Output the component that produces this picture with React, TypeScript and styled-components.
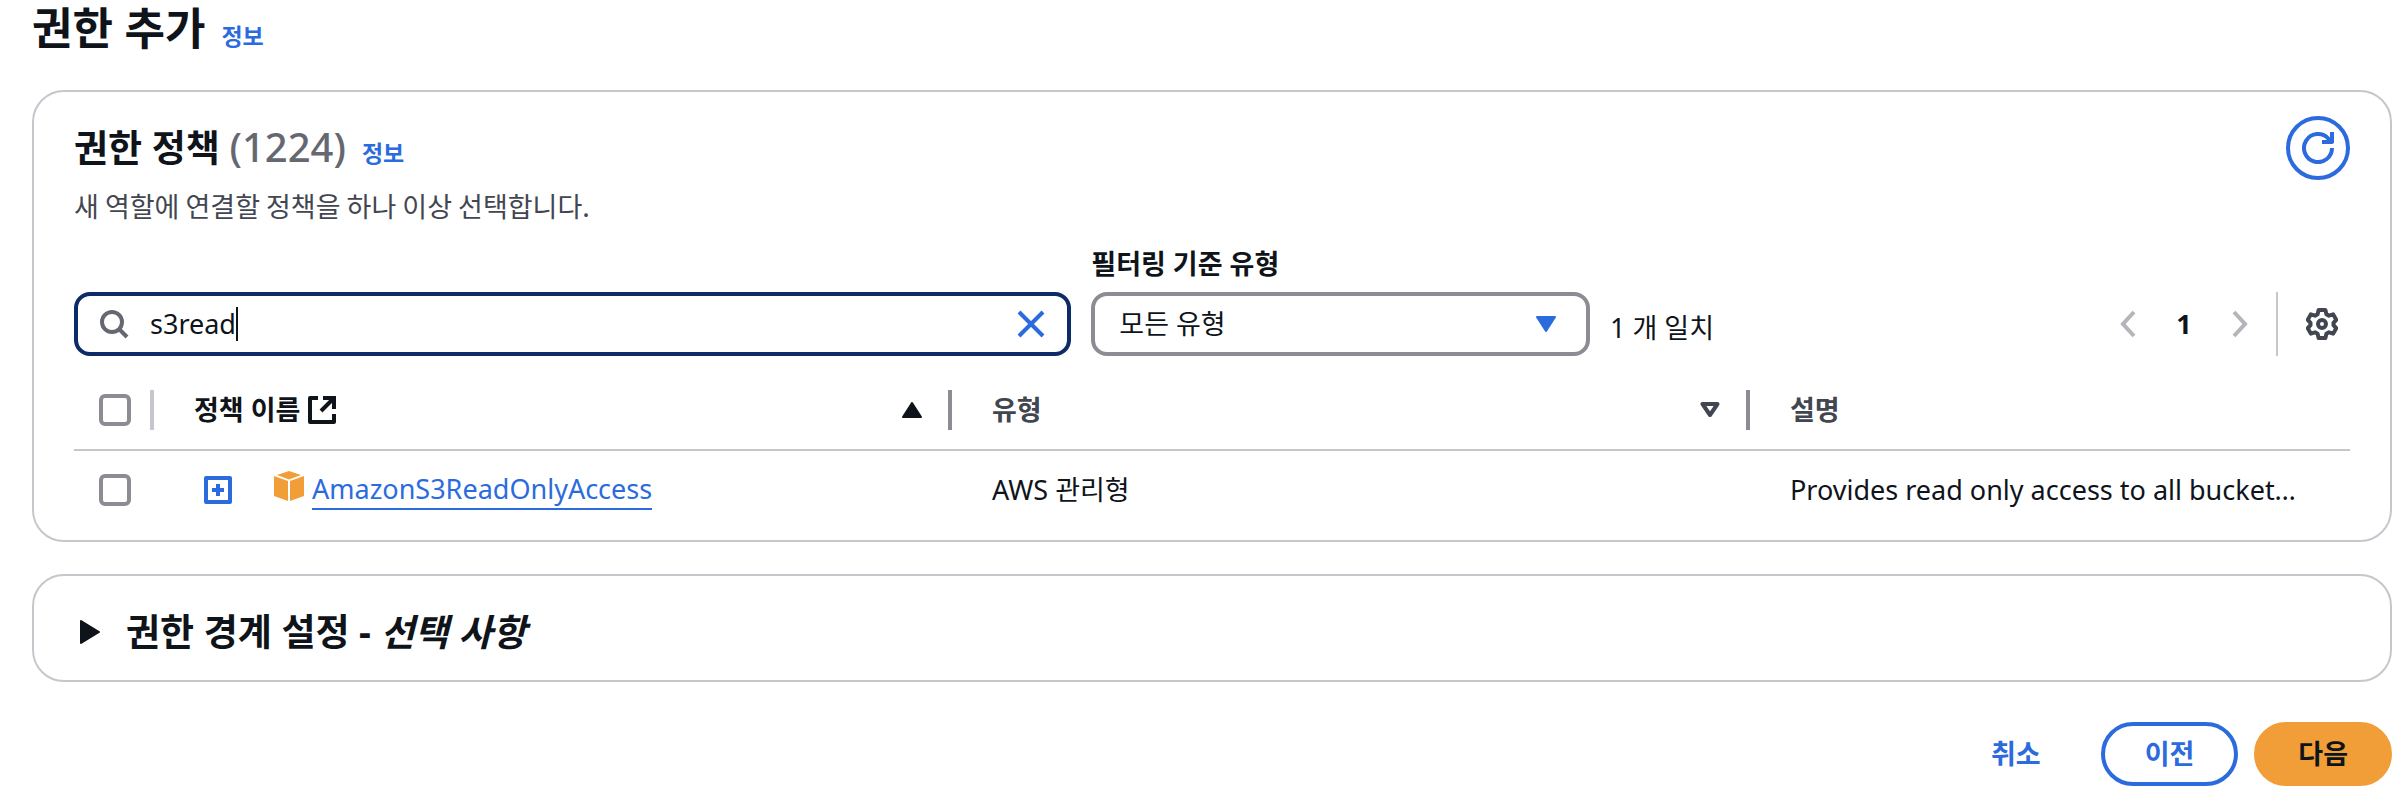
import React, { useState } from 'react';
import styled, { createGlobalStyle, css } from 'styled-components';

const color = {
  text: '#0f141a',
  heading: '#424650',
  muted: '#656871',
  line: '#c6c6cd',
  control: '#8c8c94',
  disabled: '#b4b4bb',
  link: '#2b6bdd',
  focus: '#0d2b66',
  primary: '#f19e38',
};

const Global = createGlobalStyle`
  *, *::before, *::after { box-sizing: border-box; }
  body {
    margin: 0;
    background: #fff;
    color: ${color.text};
    font-family: "Noto Sans", "Noto Sans CJK KR", sans-serif;
    font-size: 27px;
    line-height: 40px;
  }
  button, input, select { font: inherit; color: inherit; }
  svg { display: block; flex: none; }
`;

const Page = styled.main`
  display: flex;
  flex-direction: column;
  gap: 32px;
  padding: 0 16px 22px 32px;
`;

const TitleRow = styled.header`
  display: flex;
  align-items: baseline;
  gap: 16px;
`;

const PageTitle = styled.h1`
  margin: 0;
  padding-bottom: 2px;
  font-size: 44px;
  line-height: 56px;
  font-weight: 700;
`;

const SectionTitle = styled.h2`
  margin: 0;
  font-size: 37px;
  line-height: 56px;
  font-weight: 700;
`;

const Count = styled.span`
  font-size: 40px;
  line-height: 40px;
  font-weight: 500;
  color: ${color.muted};
`;

const InfoLink = styled.a`
  font-size: 23px;
  font-weight: 700;
  color: ${color.link};
  text-decoration: none;
`;

const Card = styled.section`
  border: 2px solid ${color.line};
  border-radius: 32px;
  padding: 24px 40px 18px;
`;

const CardHeader = styled.div`
  display: flex;
  justify-content: space-between;
  align-items: flex-start;
`;

const CardTitle = styled(TitleRow)`
  padding-top: 4px;
`;

const Description = styled.p`
  margin: 10px 0 0;
  color: ${color.heading};
  font-family: "Noto Sans CJK KR", sans-serif;
`;

const IconButton = styled.button`
  display: flex;
  align-items: center;
  justify-content: center;
  padding: 0;
  border: 0;
  background: none;
  color: ${color.heading};
  &:disabled { color: ${color.disabled}; }
`;

const RefreshButton = styled(IconButton)`
  width: 64px;
  height: 64px;
  border: 4px solid ${color.link};
  border-radius: 50%;
  color: ${color.link};
`;

const Toolbar = styled.div`
  display: flex;
  align-items: flex-end;
  justify-content: space-between;
  gap: 20px;
  margin-top: 18px;
`;

const Filters = styled.div`
  display: grid;
  grid-template-columns: 2fr 1fr;
  align-items: end;
  gap: 20px;
  flex: 0 1 1516px;
`;

const controlBox = css`
  height: 64px;
  border-radius: 16px;
  background: #fff;
`;

const SearchBox = styled.label`
  ${controlBox}
  display: flex;
  align-items: center;
  padding: 0 20px;
  border: 4px solid ${color.focus};
`;

const SearchInput = styled.input`
  field-sizing: content;
  min-width: 4px;
  margin-left: 20px;
  padding: 0;
  border: 0;
  outline: 0;
  background: none;
  caret-color: transparent;
`;

const Caret = styled.span`
  width: 2px;
  height: 34px;
  background: ${color.text};
`;

const ClearButton = styled(IconButton)`
  margin-left: auto;
  color: ${color.link};
`;

const TypeFilter = styled.div`
  display: flex;
  flex-direction: column;
  gap: 8px;
`;

const FilterLabel = styled.label`
  font-weight: 700;
`;

const SelectWrap = styled.div`
  display: grid;
  align-items: center;
  & > * { grid-area: 1 / 1; }
  & > svg { justify-self: end; margin-right: 34px; pointer-events: none; }
`;

const Select = styled.select`
  ${controlBox}
  appearance: none;
  width: 100%;
  padding: 0 64px 0 24px;
  border: 4px solid ${color.control};
`;

const Matches = styled.span`
  flex: 1;
  padding: 16px 0 8px;
`;

const Pager = styled.nav`
  display: flex;
  align-items: center;
  height: 64px;
`;

const PageNumber = styled.button`
  width: 96px;
  padding: 0;
  border: 0;
  background: none;
  font-weight: 700;
`;

const Preferences = styled.div`
  display: flex;
  align-items: center;
  height: 64px;
  margin-left: 28px;
  padding: 0 12px 0 28px;
  border-left: 2px solid ${color.line};
`;

const Table = styled.table`
  width: 100%;
  table-layout: fixed;
  border-collapse: collapse;
  margin-top: 14px;
`;

const Col = styled.col<{ $width?: number }>`
  width: ${(p) => (p.$width ? `${p.$width}px` : 'auto')};
`;

const HeadCell = styled.th<{ $active?: boolean }>`
  height: 80px;
  padding: 0;
  border-bottom: 2px solid ${color.line};
  font-weight: 700;
  text-align: left;
  color: ${(p) => (p.$active ? color.text : color.heading)};
`;

const HeadInner = styled.div<{ $divider?: string }>`
  display: flex;
  align-items: center;
  justify-content: space-between;
  height: 40px;
  padding: 0 26px 0 40px;
  border-right: ${(p) => (p.$divider ? `4px solid ${p.$divider}` : '0')};
`;

const SelectHead = styled(HeadInner)`
  padding: 0 0 0 25px;
`;

const HeadLabel = styled.span`
  display: flex;
  align-items: center;
  gap: 8px;
`;

const Cell = styled.td<{ $inset?: number }>`
  height: 72px;
  padding: 6px 40px 0 ${(p) => p.$inset ?? 40}px;
  overflow: hidden;
  text-overflow: ellipsis;
  white-space: nowrap;
`;

const Checkbox = styled.input.attrs({ type: 'checkbox' })`
  appearance: none;
  display: block;
  flex: none;
  width: 32px;
  height: 32px;
  margin: 0;
  border: 4px solid ${color.control};
  border-radius: 6px;
  background: #fff;
  &:checked { background: ${color.link}; border-color: ${color.link}; }
`;

const PolicyName = styled.div`
  display: flex;
  align-items: center;
`;

const ExpandButton = styled(IconButton)`
  margin-right: 42px;
  color: ${color.link};
`;

const PolicyIcon = styled.span`
  padding-bottom: 8px;
  margin-right: 8px;
`;

const PolicyLink = styled.a`
  line-height: 38px;
  border-bottom: 2px solid ${color.link};
  color: ${color.link};
  text-decoration: none;
`;

const Boundary = styled.section`
  border: 2px solid ${color.line};
  border-radius: 32px;
`;

const BoundaryToggle = styled.button`
  display: flex;
  align-items: center;
  gap: 26px;
  width: 100%;
  padding: 28px 46px 20px;
  border: 0;
  background: none;
  text-align: left;
`;

const Footer = styled.footer`
  display: flex;
  justify-content: flex-end;
  gap: 16px;
  padding-top: 8px;
`;

const Button = styled.button<{ $kind: 'link' | 'normal' | 'primary' }>`
  height: 64px;
  padding: 0 40px;
  border: 4px solid transparent;
  border-radius: 32px;
  font-weight: 700;
  background: ${(p) => (p.$kind === 'primary' ? color.primary : 'transparent')};
  border-color: ${(p) =>
    p.$kind === 'primary' ? color.primary : p.$kind === 'normal' ? color.link : 'transparent'};
  color: ${(p) => (p.$kind === 'primary' ? color.text : color.link)};
`;

const SearchIcon = () => (
  <svg width="32" height="32" viewBox="0 0 32 32" fill="none" stroke={color.muted} strokeWidth="4">
    <circle cx="14" cy="14" r="10" />
    <path d="M21 21l8 8" />
  </svg>
);

const CloseIcon = () => (
  <svg width="32" height="32" viewBox="0 0 32 32" fill="none" stroke="currentColor" strokeWidth="4">
    <path d="M4 4l24 24M28 4L4 28" />
  </svg>
);

const RefreshIcon = () => (
  <svg width="32" height="32" viewBox="0 0 32 32" fill="none" stroke="currentColor" strokeWidth="4">
    <path d="M30 16a14 14 0 1 1-3.5-9.2L29 10" />
    <path d="M30 0v10H20" strokeLinejoin="round" />
  </svg>
);

const ChevronIcon = ({ right }: { right?: boolean }) => (
  <svg width="16" height="28" viewBox="0 0 16 28" fill="none" stroke="currentColor" strokeWidth="4">
    <path d={right ? 'M2 2l11 12L2 26' : 'M14 2L3 14l11 12'} />
  </svg>
);

const GearIcon = () => (
  <svg width="32" height="32" viewBox="0 0 32 32" fill="none" stroke="currentColor" strokeWidth="4" strokeLinejoin="round">
    <path d="M12.6 2h6.8l1 4.2 2.6 1.5 4.2-1.3 3 5.4-2.7 3v2.4l2.7 3-3 5.4-4.2-1.3-2.6 1.5-1 4.2h-6.8l-1-4.2L9 24.3l-4.2 1.3-3-5.4 2.7-3v-2.4l-2.7-3 3-5.4L9 7.7l2.6-1.5z" />
    <circle cx="16" cy="16" r="4" />
  </svg>
);

const TriangleIcon = ({ kind }: { kind: 'up' | 'down' | 'outline' | 'right' }) => {
  if (kind === 'right') {
    return (
      <svg width="20" height="24" viewBox="0 0 20 24" fill={color.text} stroke={color.text} strokeWidth="2" strokeLinejoin="round">
        <path d="M1 1v22l18-11z" />
      </svg>
    );
  }
  if (kind === 'outline') {
    return (
      <svg width="20" height="16" viewBox="0 0 20 16" fill="none" stroke={color.heading} strokeWidth="4" strokeLinejoin="round">
        <path d="M2.5 2h15L10 13z" />
      </svg>
    );
  }
  const tint = kind === 'up' ? color.text : color.link;
  return (
    <svg width="20" height="16" viewBox="0 0 20 16" fill={tint} stroke={tint} strokeWidth="2" strokeLinejoin="round">
      <path d={kind === 'up' ? 'M10 1l9 14H1z' : 'M10 15L1 1h18z'} />
    </svg>
  );
};

const ExternalIcon = () => (
  <svg width="28" height="28" viewBox="0 0 28 28" fill="none" stroke={color.text} strokeWidth="4">
    <path d="M10 2H2v24h24v-8" strokeLinejoin="round" />
    <path d="M15 2h11v11M26 2L13 15" />
  </svg>
);

const ExpandIcon = () => (
  <svg width="28" height="28" viewBox="0 0 28 28" fill="none" stroke="currentColor" strokeWidth="4">
    <rect x="2" y="2" width="24" height="24" strokeLinejoin="round" />
    <path d="M14 8v12M8 14h12" />
  </svg>
);

const CubeIcon = () => (
  <svg width="30" height="30" viewBox="0 0 30 30" fill={color.primary}>
    <path d="M15 0l12 4-12 4.500L3 4z" />
    <path d="M0 5l14 5v20L0 25z" />
    <path d="M30 5l-14 5v20l14-5z" />
  </svg>
);

export default function App() {
  const [query, setQuery] = useState('s3read');
  return (
    <>
      <Global />
      <Page>
        <TitleRow>
          <PageTitle>권한 추가</PageTitle>
          <InfoLink href="#info">정보</InfoLink>
        </TitleRow>

        <Card>
          <CardHeader>
            <div>
              <CardTitle>
                <SectionTitle>
                  권한 정책 <Count>(1224)</Count>
                </SectionTitle>
                <InfoLink href="#policy-info">정보</InfoLink>
              </CardTitle>
              <Description>새 역할에 연결할 정책을 하나 이상 선택합니다.</Description>
            </div>
            <RefreshButton aria-label="새로 고침">
              <RefreshIcon />
            </RefreshButton>
          </CardHeader>

          <Toolbar>
            <Filters>
              <SearchBox>
                <SearchIcon />
                <SearchInput aria-label="검색" value={query} onChange={(e) => setQuery(e.target.value)} />
                <Caret />
                <ClearButton type="button" aria-label="지우기" onClick={() => setQuery('')}>
                  <CloseIcon />
                </ClearButton>
              </SearchBox>
              <TypeFilter>
                <FilterLabel htmlFor="type">필터링 기준 유형</FilterLabel>
                <SelectWrap>
                  <Select id="type">
                    <option>모든 유형</option>
                  </Select>
                  <TriangleIcon kind="down" />
                </SelectWrap>
              </TypeFilter>
            </Filters>
            <Matches>1 개 일치</Matches>
            <Pager aria-label="페이지">
              <IconButton disabled aria-label="이전 페이지">
                <ChevronIcon />
              </IconButton>
              <PageNumber aria-current="page">1</PageNumber>
              <IconButton disabled aria-label="다음 페이지">
                <ChevronIcon right />
              </IconButton>
              <Preferences>
                <IconButton aria-label="기본 설정">
                  <GearIcon />
                </IconButton>
              </Preferences>
            </Pager>
          </Toolbar>

          <Table>
            <colgroup>
              <Col $width={80} />
              <Col $width={798} />
              <Col $width={798} />
              <Col />
            </colgroup>
            <thead>
              <tr>
                <HeadCell>
                  <SelectHead $divider={color.line}>
                    <Checkbox aria-label="모두 선택" />
                  </SelectHead>
                </HeadCell>
                <HeadCell $active aria-sort="ascending">
                  <HeadInner $divider={color.control}>
                    <HeadLabel>
                      정책 이름 <ExternalIcon />
                    </HeadLabel>
                    <TriangleIcon kind="up" />
                  </HeadInner>
                </HeadCell>
                <HeadCell>
                  <HeadInner $divider={color.control}>
                    유형 <TriangleIcon kind="outline" />
                  </HeadInner>
                </HeadCell>
                <HeadCell>
                  <HeadInner>설명</HeadInner>
                </HeadCell>
              </tr>
            </thead>
            <tbody>
              <tr>
                <Cell $inset={25}>
                  <Checkbox aria-label="AmazonS3ReadOnlyAccess" />
                </Cell>
                <Cell $inset={50}>
                  <PolicyName>
                    <ExpandButton aria-label="확장">
                      <ExpandIcon />
                    </ExpandButton>
                    <PolicyIcon>
                      <CubeIcon />
                    </PolicyIcon>
                    <PolicyLink href="#policy">AmazonS3ReadOnlyAccess</PolicyLink>
                  </PolicyName>
                </Cell>
                <Cell>AWS 관리형</Cell>
                <Cell>Provides read only access to all bucket…</Cell>
              </tr>
            </tbody>
          </Table>
        </Card>

        <Boundary>
          <BoundaryToggle aria-expanded="false">
            <TriangleIcon kind="right" />
            <SectionTitle>
              권한 경계 설정 - <em>선택 사항</em>
            </SectionTitle>
          </BoundaryToggle>
        </Boundary>

        <Footer>
          <Button $kind="link">취소</Button>
          <Button $kind="normal">이전</Button>
          <Button $kind="primary">다음</Button>
        </Footer>
      </Page>
    </>
  );
}
